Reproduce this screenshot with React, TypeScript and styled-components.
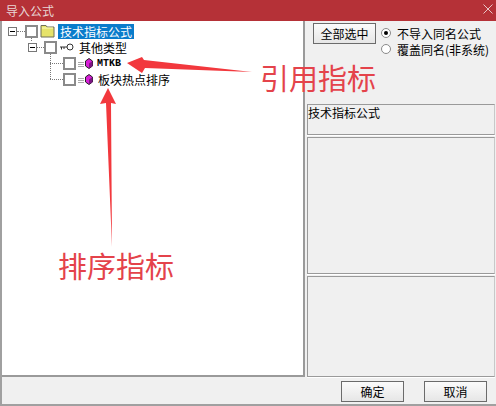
import React from "react";
import styled, { createGlobalStyle } from "styled-components";

const GlobalStyle = createGlobalStyle`
  html, body {
    margin: 0;
    padding: 0;
    background: #f0f0f0;
  }
`;

const Dialog = styled.div`
  position: relative;
  width: 496px;
  height: 406px;
  overflow: hidden;
  display: flex;
  flex-direction: column;
  background: #f0f0f0;
  font-family: "Noto Sans CJK SC", "Liberation Sans", sans-serif;
  font-size: 12px;
  color: #000;
`;

const TitleBar = styled.div`
  height: 21px;
  flex: none;
  display: flex;
  align-items: center;
  justify-content: space-between;
  padding: 0 3px 0 6px;
  background: #b53137;
  color: #e8d6d6;
  font-size: 12px;
`;

const CloseIcon = styled.svg`
  margin-bottom: 4px;
`;

const Body = styled.div`
  flex: 1;
  display: flex;
  gap: 2px;
  min-height: 0;
  border-left: 2px solid #a0a0a0;
`;

const TreePane = styled.div`
  width: 303px;
  height: 356px;
  box-sizing: border-box;
  padding: 2px 0 0 6px;
  background: #fff;
  border: solid #9a9a9a;
  border-width: 0 2px 2px 0;
`;

const TreeRow = styled.div<{ $indent: number }>`
  height: 16px;
  display: flex;
  align-items: center;
  margin-left: ${(p) => p.$indent}px;
`;

const Expander = styled.span`
  width: 9px;
  height: 9px;
  box-sizing: border-box;
  border: 1px solid #777;
  background: #fff;
  display: flex;
  align-items: center;
  justify-content: center;
  flex: none;
  &::before {
    content: "";
    width: 5px;
    height: 1px;
    background: #000;
  }
`;

const Dots = styled.span<{ $width: number }>`
  width: ${(p) => p.$width}px;
  border-top: 1px dotted #777;
  flex: none;
`;

const CheckBox = styled.span`
  width: 13px;
  height: 13px;
  box-sizing: border-box;
  border: 2px solid #8a8a8a;
  background: #fff;
  flex: none;
`;

const Label = styled.span<{ $selected?: boolean }>`
  margin-left: 3px;
  padding: 0 2px;
  line-height: 15px;
  white-space: nowrap;
  background: ${(p) => (p.$selected ? "#0a7ccb" : "transparent")};
  color: ${(p) => (p.$selected ? "#fff" : "#000")};
`;

const MonoLabel = styled(Label)`
  margin-left: 2px;
  font-family: "Liberation Mono", monospace;
  font-size: 10px;
  font-weight: 700;
`;

const Side = styled.div`
  flex: 1;
  display: flex;
  flex-direction: column;
  gap: 2px;
  padding-right: 1px;
`;

const Options = styled.div`
  height: 81px;
  flex: none;
  display: flex;
  gap: 5px;
  padding: 2px 0 0 6px;
  box-sizing: border-box;
`;

const Button = styled.button`
  width: 63px;
  height: 21px;
  padding: 0;
  box-sizing: border-box;
  border: 1px solid #6b6b6b;
  border-radius: 0;
  background: linear-gradient(#fbfbfb, #e6e6e6);
  font: inherit;
  color: #000;
`;

const RadioColumn = styled.div`
  display: flex;
  flex-direction: column;
  gap: 0;
  padding-top: 2px;
`;

const RadioRow = styled.div`
  height: 16px;
  display: flex;
  align-items: center;
  gap: 6px;
  white-space: nowrap;
`;

const Radio = styled.span<{ $on?: boolean }>`
  width: 10px;
  height: 10px;
  box-sizing: border-box;
  border-radius: 50%;
  border: 1px solid #8a8a8a;
  background: #fff;
  display: flex;
  align-items: center;
  justify-content: center;
  &::before {
    content: "";
    width: 4px;
    height: 4px;
    border-radius: 50%;
    background: ${(p) => (p.$on ? "#000" : "transparent")};
  }
`;

const Panel = styled.div<{ $height: number }>`
  height: ${(p) => p.$height}px;
  flex: none;
  box-sizing: border-box;
  border: 1px solid #9a9a9a;
  border-right-color: #c8c8c8;
  box-shadow: 0 1px 0 #fff;
  background: #f0f0f0;
  line-height: 14px;
  padding-top: 1px;
  white-space: nowrap;
`;

const Footer = styled.div`
  height: 29px;
  flex: none;
  display: flex;
  justify-content: flex-end;
  gap: 20px;
  padding: 4px 9px 0 0;
  box-sizing: border-box;
  border-left: 2px solid #a0a0a0;
  border-bottom: 2px solid #a0a0a0;
`;

const Overlay = styled.svg`
  position: absolute;
  left: 0;
  top: 0;
  pointer-events: none;
`;

const Callout = styled.span<{ $x: number; $y: number }>`
  position: absolute;
  left: ${(p) => p.$x}px;
  top: ${(p) => p.$y}px;
  font-size: 29px;
  line-height: 32px;
  color: #e4434b;
  white-space: nowrap;
`;

const Folder = () => (
  <svg width="15" height="14" viewBox="0 0 15 14" style={{ flex: "none", marginLeft: 2 }}>
    <path d="M1 3 L1 1.5 L6 1.5 L7 3 L14 3 L14 13 L1 13 Z" fill="#e6e36a" stroke="#6f6f58" />
    <path d="M2 4 H13" stroke="#fbfbc0" />
  </svg>
);

const KeyIcon = () => (
  <svg width="14" height="9" viewBox="0 0 14 9" style={{ flex: "none", marginLeft: 3 }}>
    <circle cx="10" cy="4" r="3" fill="#fff" stroke="#333" />
    <path d="M0 4 H7 M1.5 4 V6.5 M4 4 V6" stroke="#333" />
  </svg>
);

const GemIcon = () => (
  <svg width="15" height="11" viewBox="0 0 15 11" style={{ flex: "none", marginLeft: 2 }}>
    <path d="M0 4.5 H6 M0 6.5 H6 M0 8.5 H6" stroke="#aaa" />
    <path d="M11 0.5 L14.5 3 V8 L11 10.5 L7.5 8 V3 Z" fill="#d81fd8" stroke="#222" />
    <path d="M11 5.5 L14.5 3 V8 L11 10.5 Z" fill="#7d1684" />
  </svg>
);

const Annotations = () => (
  <Overlay width="496" height="406" viewBox="0 0 496 406">
    <path d="M31.5 38 V42 M50.5 54 V79" stroke="#777" strokeDasharray="1 1" fill="none" />
    <path d="M127 63 L142 57 L144 60 L252 72 L145 68 L142 73 Z" fill="#f2383d" />
    <path d="M108 88 L116 104 L111 103 L112 247 L106 103 L100 104 Z" fill="#f2383d" />
  </Overlay>
);

export default function App() {
  return (
    <Dialog>
      <GlobalStyle />
      <TitleBar>
        <span>导入公式</span>
        <CloseIcon width="10" height="10" viewBox="0 0 10 10">
          <path d="M0.5 0.5 L9.5 9.5 M9.5 0.5 L0.5 9.5" stroke="#e8c6c6" />
        </CloseIcon>
      </TitleBar>
      <Body>
        <TreePane>
          <TreeRow $indent={0}>
            <Expander />
            <Dots $width={8} />
            <CheckBox />
            <Folder />
            <Label $selected>技术指标公式</Label>
          </TreeRow>
          <TreeRow $indent={20}>
            <Expander />
            <Dots $width={7} />
            <CheckBox />
            <KeyIcon />
            <Label>其他类型</Label>
          </TreeRow>
          <TreeRow $indent={42}>
            <Dots $width={13} />
            <CheckBox />
            <GemIcon />
            <MonoLabel>MTKB</MonoLabel>
          </TreeRow>
          <TreeRow $indent={42}>
            <Dots $width={13} />
            <CheckBox />
            <GemIcon />
            <Label>板块热点排序</Label>
          </TreeRow>
        </TreePane>
        <Side>
          <Options>
            <Button>全部选中</Button>
            <RadioColumn>
              <RadioRow>
                <Radio $on />
                不导入同名公式
              </RadioRow>
              <RadioRow>
                <Radio />
                覆盖同名(非系统)
              </RadioRow>
            </RadioColumn>
          </Options>
          <Panel $height={31}>技术指标公式</Panel>
          <Panel $height={137} />
          <Panel $height={101} />
        </Side>
      </Body>
      <Footer>
        <Button>确定</Button>
        <Button>取消</Button>
      </Footer>
      <Annotations />
      <Callout $x={260} $y={61}>引用指标</Callout>
      <Callout $x={58} $y={249}>排序指标</Callout>
    </Dialog>
  );
}
